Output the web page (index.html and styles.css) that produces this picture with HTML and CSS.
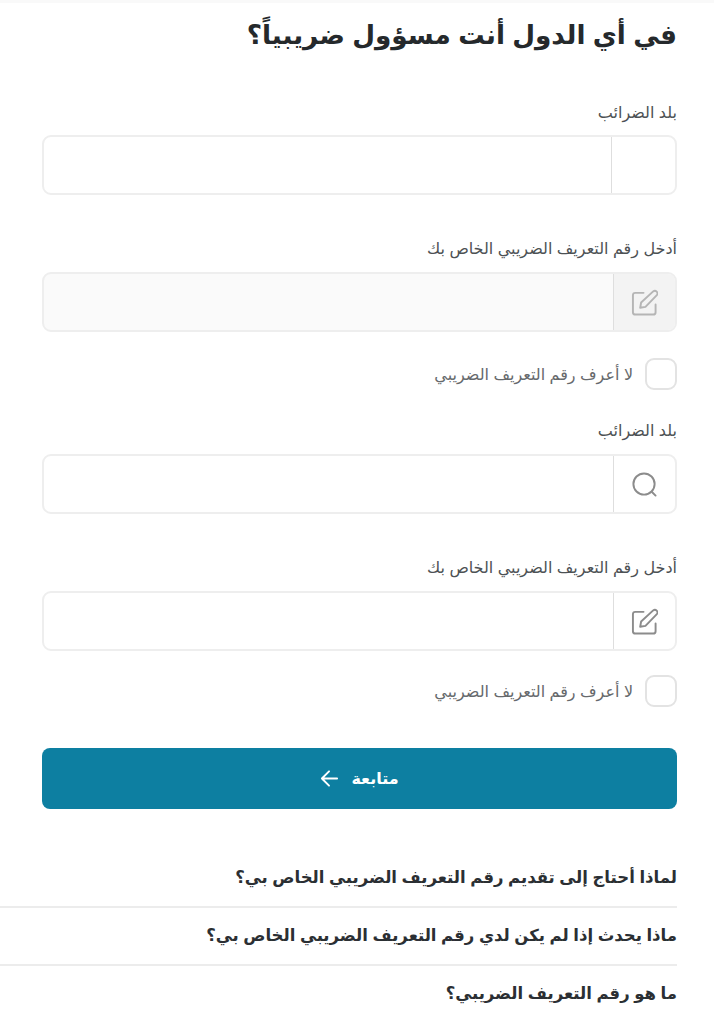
FILE: index.html
```html
<!DOCTYPE html>
<html lang="ar" dir="rtl">
<head>
    <meta charset="UTF-8">
    <meta name="viewport" content="width=device-width, initial-scale=1.0">
    <title>الضرائب</title>
    <link rel="stylesheet" href="styles.css">
</head>
<body>
    <div class="top-line"></div>

    <div class="page">
        <h1 class="title">في أي الدول أنت مسؤول ضريبياً؟</h1>

        <div class="field field-first">
            <label class="label label-first">بلد الضرائب</label>
            <div class="input-box">
                <div class="addon addon-narrow"></div>
            </div>
        </div>

        <div class="field field-next">
            <label class="label">أدخل رقم التعريف الضريبي الخاص بك</label>
            <div class="input-box disabled">
                <div class="addon">
                    <svg class="icon" viewBox="0 0 28 28" fill="none" stroke-width="2" stroke-linecap="round" stroke-linejoin="round">
                        <path d="M13 4H4.500A2.500 2.500 0 0 0 2 6.500V24a2.500 2.500 0 0 0 2.500 2.500H23a2.500 2.500 0 0 0 2.500-2.500V16"/>
                        <path d="M23 2.500a2.700 2.700 0 0 1 3.800 3.800L15 18.500l-5.500 1 1-5.500z"/>
                    </svg>
                </div>
            </div>
        </div>

        <label class="check">
            <span class="box"></span>
            <span>لا أعرف رقم التعريف الضريبي</span>
        </label>

        <div class="field field-after-check">
            <label class="label">بلد الضرائب</label>
            <div class="input-box">
                <div class="addon">
                    <svg class="icon" viewBox="0 0 28 28" fill="none" stroke-width="2" stroke-linecap="round" stroke-linejoin="round">
                        <circle cx="13.500" cy="13.500" r="11"/>
                        <path d="M21.500 21.500l4 4"/>
                    </svg>
                </div>
            </div>
        </div>

        <div class="field field-next">
            <label class="label">أدخل رقم التعريف الضريبي الخاص بك</label>
            <div class="input-box">
                <div class="addon">
                    <svg class="icon" viewBox="0 0 28 28" fill="none" stroke-width="2" stroke-linecap="round" stroke-linejoin="round">
                        <path d="M13 4H4.500A2.500 2.500 0 0 0 2 6.500V24a2.500 2.500 0 0 0 2.500 2.500H23a2.500 2.500 0 0 0 2.500-2.500V16"/>
                        <path d="M23 2.500a2.700 2.700 0 0 1 3.800 3.800L15 18.500l-5.500 1 1-5.500z"/>
                    </svg>
                </div>
            </div>
        </div>

        <label class="check check-last">
            <span class="box"></span>
            <span>لا أعرف رقم التعريف الضريبي</span>
        </label>

        <button class="next-btn">
            <span>متابعة</span>
            <svg class="arrow" viewBox="0 0 20 20" fill="none" stroke="#fff" stroke-width="2" stroke-linecap="round" stroke-linejoin="round">
                <path d="M18 10H2M9.500 2.500L2 10l7.500 7.500"/>
            </svg>
        </button>

        <div class="faq">
            <div class="faq-item">لماذا أحتاج إلى تقديم رقم التعريف الضريبي الخاص بي؟</div>
            <div class="faq-item">ماذا يحدث إذا لم يكن لدي رقم التعريف الضريبي الخاص بي؟</div>
            <div class="faq-item">ما هو رقم التعريف الضريبي؟</div>
        </div>
    </div>
</body>
</html>
```

FILE: styles.css
```css
html, body { margin: 0; padding: 0; background: #fff; }
body {
    font-family: "Liberation Sans", "DejaVu Sans", sans-serif;
    color: #2b2f33;
    height: 1024px;
    overflow: hidden;
}
.top-line { height: 3px; background: #f9f9f9; }

.page { padding: 0 37px 0 0; }

.title { margin: 13px 0 0; font-size: 26.3px; line-height: 38px; font-weight: bold; color: #25292c; }

.field, .check, .next-btn { margin-left: 42px; }

.field-first { margin-top: 48px; }
.field-next { margin-top: 43px; }
.field-after-check { margin-top: 30px; }

.label { display: block; font-size: 16px; line-height: 22px; margin-bottom: 12px; color: #4d5154; }
.label-first { margin-bottom: 11px; }

.input-box {
    height: 56px;
    border: 2px solid #eeeeee;
    border-radius: 9px;
    display: flex;
    background: #fff;
}
.input-box.disabled { background: #fafafa; }
.addon {
    width: 61px;
    border-left: 1px solid #dedede;
    display: flex;
    align-items: center;
    justify-content: center;
}
.addon-narrow { width: 63px; }
.disabled .addon { background: #f3f3f3; border-radius: 0 7px 7px 0; }

.icon { width: 27px; height: 27px; stroke: #8c8c8c; }
.disabled .icon { stroke: #b5b5b5; }

.check { display: flex; align-items: center; gap: 12px; margin-top: 26px; font-size: 16px; color: #66696c; }
.check-last { margin-top: 24px; }
.box { width: 28px; height: 28px; border: 2px solid #e3e3e3; border-radius: 9px; flex: none; }

.next-btn {
    display: flex;
    align-items: center;
    justify-content: center;
    gap: 12px;
    width: calc(100% - 42px);
    height: 61px;
    margin-top: 41px;
    border: none;
    border-radius: 8px;
    background: #0d7fa1;
    color: #fff;
    font-family: inherit;
    font-size: 16px;
    font-weight: bold;
}
.arrow { width: 19px; height: 19px; }

.faq { margin-top: 41px; }
.faq-item {
    font-size: 16.5px;
    font-weight: bold;
    line-height: 28px;
    padding: 13px 0 15px;
    border-bottom: 2px solid #ececec;
    color: #2b2f33;
}
.faq-item:last-child { border-bottom: none; }
```
